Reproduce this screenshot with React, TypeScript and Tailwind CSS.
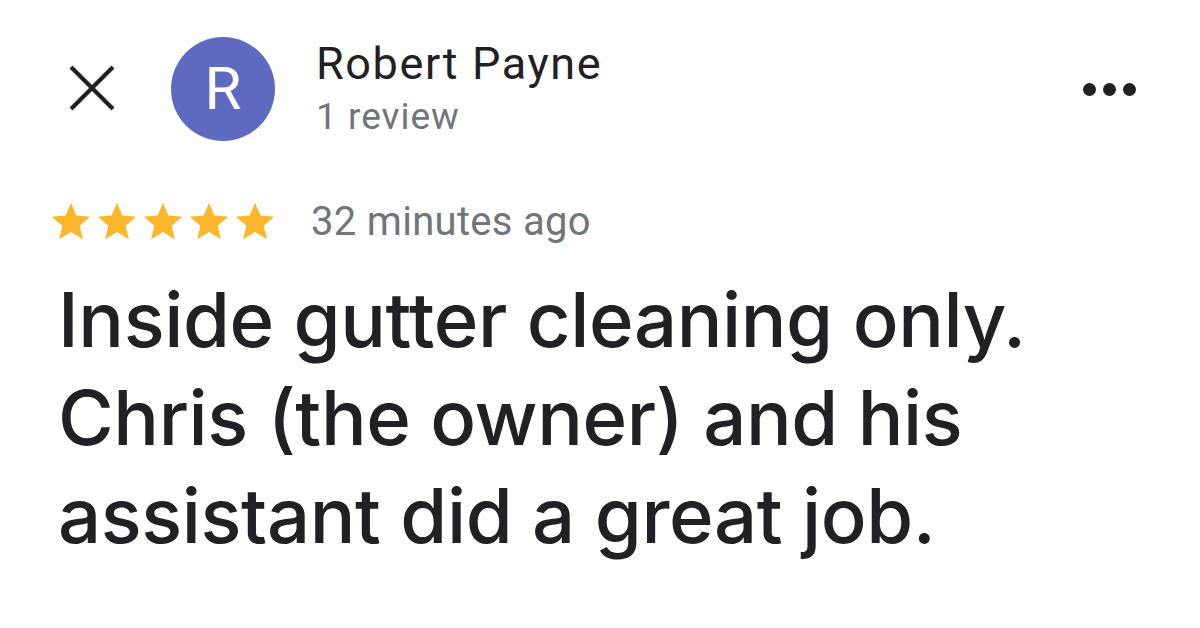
const STAR = "M12 17.27L18.18 21l-1.64-7.03L22 9.24l-7.19-.61L12 2 9.19 8.63 2 9.24l5.46 4.73L5.82 21z";

function Star() {
  return (
    <svg width="46" height="46" viewBox="0 0 24 24" className="shrink-0">
      <path d={STAR} fill="#fbb62c" />
    </svg>
  );
}

export default function App() {
  return (
    <div className="w-[1200px] h-[628px] bg-white overflow-hidden">
      <div className="flex items-start pt-[37px] pl-[69px] pr-[64px]">
        <svg width="46" height="46" viewBox="0 0 46 46" className="mt-[28px] shrink-0">
          <path d="M2 2L44 44M44 2L2 44" stroke="#202124" strokeWidth="4.2" />
        </svg>
        <div
          className="ml-[56px] w-[104px] h-[104px] rounded-full bg-[#5c6bc0] flex items-center justify-center text-white text-[60px] leading-none shrink-0"
          style={{ fontFamily: "Roboto, sans-serif" }}
        >
          R
        </div>
        <div className="ml-[41px] mt-[1px] flex flex-col gap-[5px] font-['Roboto',sans-serif]">
          <div className="text-[45px] leading-[52px] tracking-[1.6px] text-[#202124]">Robert Payne</div>
          <div className="text-[37px] leading-[44px] tracking-[1px] text-[#70757a]">1 review</div>
        </div>
        <div className="ml-auto mt-[46px] flex gap-[7px]">
          <span className="w-[13px] h-[13px] rounded-full bg-[#202124]" />
          <span className="w-[13px] h-[13px] rounded-full bg-[#202124]" />
          <span className="w-[13px] h-[13px] rounded-full bg-[#202124]" />
        </div>
      </div>

      <div className="flex items-center pl-[48px] mt-[58px]">
        <div className="flex">
          <Star />
          <Star />
          <Star />
          <Star />
          <Star />
        </div>
        <span className="ml-[33px] text-[40px] leading-[46px] tracking-[0.3px] text-[#70757a] font-['Roboto',sans-serif]">
          32 minutes ago
        </span>
      </div>

      <p className="pl-[58px] mt-[25px] text-[76px] leading-[98px] font-medium tracking-[-0.4px] text-[#202124] font-['Inter',sans-serif]">
        <span className="block">Inside gutter cleaning only.</span>
        <span className="block">Chris (the owner) and his</span>
        <span className="block">assistant did a great job.</span>
      </p>
    </div>
  );
}
